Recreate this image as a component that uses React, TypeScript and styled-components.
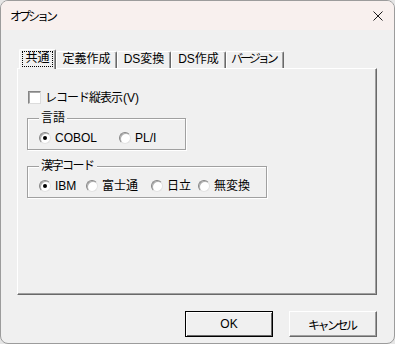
import React from "react";
import styled, { createGlobalStyle } from "styled-components";

const GlobalStyle = createGlobalStyle`
  html, body {
    margin: 0;
    padding: 0;
    background: #e6e6e6;
  }
  body {
    font-family: "Liberation Sans", "Noto Sans CJK JP", sans-serif;
    font-size: 12px;
    color: #000;
    white-space: nowrap;
  }
`;

// spacing squeezes kana runs, the dialog font sets kana proportionally
const tabs = [
  { label: "共通", width: 37, spacing: 0 },
  { label: "定義作成", width: 61, spacing: 0 },
  { label: "DS変換", width: 54, spacing: 0 },
  { label: "DS作成", width: 55, spacing: 0 },
  { label: "バージョン", width: 58, spacing: -3 },
];

const languages = [
  { label: "COBOL", width: 80, checked: true },
  { label: "PL/I", checked: false },
];

const kanjiCodes = [
  { label: "IBM", width: 47, checked: true },
  { label: "富士通", width: 65, checked: false },
  { label: "日立", width: 47, checked: false },
  { label: "無変換", checked: false },
];

interface Option {
  label: string;
  width?: number;
  checked: boolean;
}

const OptionsDialog = () => {
  const renderOptions = (options: Option[]) =>
    options.map((opt) => (
      <RadioOption key={opt.label} $width={opt.width}>
        <RadioCircle $checked={opt.checked} />
        <span>{opt.label}</span>
      </RadioOption>
    ));

  return (
    <Window>
      <TitleBar>
        <Title $spacing={-3}>オプション</Title>
        <CloseButton>
          <svg width="10" height="10" viewBox="0 0 10 10">
            <path d="M0.5 0.5 L9.5 9.5 M9.5 0.5 L0.5 9.5" stroke="#1b1b1b" strokeWidth="1" />
          </svg>
        </CloseButton>
      </TitleBar>
      <Body>
        <TabStrip>
          {tabs.map((tab, i) => (
            <Tab key={tab.label} $active={i === 0} $width={tab.width}>
              <TabLabel $focused={i === 0}>
                <Text $spacing={tab.spacing}>{tab.label}</Text>
              </TabLabel>
            </Tab>
          ))}
        </TabStrip>
        <Panel>
          <CheckRow>
            <CheckBox />
            <Text $spacing={-1}>レコード縦表示</Text>
            <span>(V)</span>
          </CheckRow>
          <Group $width={159} $top={14}>
            <GroupLabel>言語</GroupLabel>
            <RadioRow>{renderOptions(languages)}</RadioRow>
          </Group>
          <Group $width={240} $top={16}>
            <GroupLabel>
              <Text $spacing={-1.5}>漢字コード</Text>
            </GroupLabel>
            <RadioRow>{renderOptions(kanjiCodes)}</RadioRow>
          </Group>
        </Panel>
        <Footer>
          <Button $default>OK</Button>
          <Button>
            <Text $spacing={-2.5}>キャンセル</Text>
          </Button>
        </Footer>
      </Body>
    </Window>
  );
};

const Window = styled.div`
  width: 395px;
  height: 344px;
  box-sizing: border-box;
  border: 1px solid #9c9c9c;
  border-radius: 8px;
  overflow: hidden;
  background: #f0f0f0;
  display: flex;
  flex-direction: column;
`;

const TitleBar = styled.div`
  height: 29px;
  flex-shrink: 0;
  background: #f8f0ee;
  display: flex;
  align-items: center;
  justify-content: space-between;
  padding-left: 9px;
`;

const Text = styled.span<{ $spacing: number }>`
  letter-spacing: ${(p) => p.$spacing}px;
  margin-right: ${(p) => -p.$spacing}px;
`;

const Title = styled(Text)`
  font-family: "Noto Sans CJK JP", sans-serif;
  font-size: 12px;
  line-height: 14px;
`;

const CloseButton = styled.div`
  width: 46px;
  height: 29px;
  display: flex;
  align-items: center;
  justify-content: center;
  margin-right: -7px;
  padding-top: 1px;
  box-sizing: border-box;
`;

const Body = styled.div`
  flex: 1;
  padding: 19px 17px 0 16px;
  display: flex;
  flex-direction: column;
`;

const TabStrip = styled.div`
  display: flex;
  align-items: flex-end;
  height: 19px;
  padding-left: 2px;
`;

const Tab = styled.div<{ $active?: boolean; $width: number }>`
  width: ${(p) => p.$width}px;
  flex-shrink: 0;
  height: ${(p) => (p.$active ? 20 : 17)}px;
  margin-bottom: ${(p) => (p.$active ? -1 : 0)}px;
  box-sizing: border-box;
  border-top: 1px solid #fff;
  border-left: 1px solid #fff;
  border-right: 1px solid #696969;
  box-shadow: inset -1px 0 0 #a0a0a0;
  border-radius: 2px 2px 0 0;
  background: #f0f0f0;
  position: relative;
  z-index: ${(p) => (p.$active ? 1 : 0)};
  display: flex;
  align-items: ${(p) => (p.$active ? "flex-start" : "center")};
  padding-top: ${(p) => (p.$active ? 2 : 0)}px;
  justify-content: center;
  line-height: 13px;
`;

const TabLabel = styled.span<{ $focused?: boolean }>`
  padding: 0 2px 1px;
  outline: ${(p) => (p.$focused ? "1px dotted #000" : "none")};
`;

const Panel = styled.div`
  width: 360px;
  height: 227px;
  box-sizing: border-box;
  border-top: 1px solid #fff;
  border-left: 1px solid #fff;
  border-right: 1px solid #696969;
  border-bottom: 1px solid #696969;
  box-shadow: inset -1px -1px 0 #a0a0a0;
  padding: 0 0 0 10px;
  display: flex;
  flex-direction: column;
  align-items: flex-start;
`;

const CheckRow = styled.div`
  display: flex;
  align-items: center;
  height: 13px;
  margin-top: 22px;
  line-height: 14px;

  & > span:nth-child(2) {
    margin-left: 4px;
  }
`;

const CheckBox = styled.span`
  width: 13px;
  height: 13px;
  box-sizing: border-box;
  background: #fff;
  border: 1px solid;
  border-color: #858585 #dcdcdc #dcdcdc #858585;
  box-shadow: inset 1px 1px 0 #a8a8a8;
`;

const Group = styled.div<{ $width: number; $top: number }>`
  position: relative;
  width: ${(p) => p.$width}px;
  height: 32px;
  box-sizing: border-box;
  margin-top: ${(p) => p.$top}px;
  margin-left: -1px;
  border: 1px solid #a0a0a0;
  box-shadow: 1px 1px 0 #fff, inset 1px 1px 0 #fff;
  padding: 12px 0 0 11px;
`;

const GroupLabel = styled.span`
  position: absolute;
  top: -8px;
  left: 11px;
  padding: 0 2px;
  background: #f0f0f0;
  line-height: 14px;
`;

const RadioRow = styled.div`
  display: flex;
  align-items: center;
  height: 14px;
`;

const RadioOption = styled.div<{ $width?: number }>`
  display: flex;
  align-items: center;
  gap: 4px;
  width: ${(p) => (p.$width ? `${p.$width}px` : "auto")};
  line-height: 14px;
`;

const RadioCircle = styled.span<{ $checked?: boolean }>`
  width: 12px;
  height: 12px;
  flex-shrink: 0;
  box-sizing: border-box;
  border-radius: 50%;
  background: #fff;
  border: 1px solid;
  border-color: #858585 #e2e2e2 #e2e2e2 #858585;
  box-shadow: inset 1px 1px 0 #b0b0b0;
  display: flex;
  align-items: center;
  justify-content: center;

  &::after {
    content: "";
    display: ${(p) => (p.$checked ? "block" : "none")};
    width: 4px;
    height: 4px;
    border-radius: 50%;
    background: #000;
  }
`;

const Footer = styled.div`
  display: flex;
  justify-content: flex-end;
  gap: 16px;
  margin-top: 16px;
`;

const Button = styled.button<{ $default?: boolean }>`
  width: 88px;
  height: 26px;
  box-sizing: border-box;
  background: #f0f0f0;
  font-family: "Liberation Sans", "Noto Sans CJK JP", sans-serif;
  font-size: 12px;
  color: #000;
  padding: 0;
  border: 1px solid;
  border-color: ${(p) =>
    p.$default ? "#000" : "#fff #696969 #696969 #fff"};
  box-shadow: ${(p) =>
    p.$default
      ? "inset 1px 1px 0 #fff, inset -1px -1px 0 #696969"
      : "inset -1px -1px 0 #a0a0a0"};
`;

const App = () => (
  <>
    <GlobalStyle />
    <OptionsDialog />
  </>
);

export default App;
